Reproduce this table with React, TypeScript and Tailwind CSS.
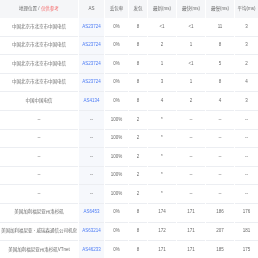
type Row = {
  loc: string
  as: string
  loss: string
  sent: string
  last: string
  best: string
  worst: string
  avg: string
}

const CN = '中国北京市北京市中国电信'

const ROWS: Row[] = [
  { loc: CN, as: 'AS23724', loss: '0%', sent: '8', last: '<1', best: '<1', worst: '11', avg: '3' },
  { loc: CN, as: 'AS23724', loss: '0%', sent: '8', last: '2', best: '1', worst: '8', avg: '3' },
  { loc: CN, as: 'AS23724', loss: '0%', sent: '8', last: '1', best: '<1', worst: '5', avg: '2' },
  { loc: CN, as: 'AS23724', loss: '0%', sent: '8', last: '3', best: '1', worst: '8', avg: '4' },
  { loc: '中国中国电信', as: 'AS4134', loss: '0%', sent: '8', last: '4', best: '2', worst: '4', avg: '3' },
  { loc: '--', as: '--', loss: '100%', sent: '2', last: '*', best: '--', worst: '--', avg: '--' },
  { loc: '--', as: '--', loss: '100%', sent: '2', last: '*', best: '--', worst: '--', avg: '--' },
  { loc: '--', as: '--', loss: '100%', sent: '2', last: '*', best: '--', worst: '--', avg: '--' },
  { loc: '--', as: '--', loss: '100%', sent: '2', last: '*', best: '--', worst: '--', avg: '--' },
  { loc: '--', as: '--', loss: '100%', sent: '2', last: '*', best: '--', worst: '--', avg: '--' },
  { loc: '美国加利福尼亚州洛杉矶', as: 'AS6453', loss: '0%', sent: '8', last: '174', best: '171', worst: '186', avg: '176' },
  { loc: '美国加利福尼亚 - 威瑞森通信公司机房', as: 'AS63214', loss: '0%', sent: '8', last: '172', best: '171', worst: '207', avg: '181' },
  { loc: '美国加利福尼亚州洛杉矶VTnet', as: 'AS46233', loss: '0%', sent: '8', last: '171', best: '171', worst: '185', avg: '175' },
]

const HEADS = ['AS', '丢包率', '发包', '最新(ms)', '最快(ms)', '最慢(ms)', '平均(ms)']

export default function App() {
  return (
    <div
      className="w-[258px] h-[258px] overflow-hidden bg-white text-[#6b6b6b] text-[4.5px] leading-none will-change-transform"
      style={{ fontFamily: '"Liberation Sans", "Noto Sans CJK SC", sans-serif' }}
    >
      <table className="w-[260px] table-fixed border-separate [border-spacing:1px_0] -mx-px">
        <colgroup>
          <col className="w-[78px]" />
          <col className="w-[25px]" />
          <col className="w-[23px]" />
          <col className="w-[18px]" />
          <col className="w-[28px]" />
          <col className="w-[28px]" />
          <col className="w-[28px]" />
          <col className="w-[23px]" />
        </colgroup>
        <thead>
          <tr className="h-[18px] bg-[#f5f6f8]">
            <th className="font-normal text-center">
              地理位置 / <span className="text-[#f56c6c]">仅供参考</span>
            </th>
            {HEADS.map((h) => (
              <th key={h} className="font-normal text-center whitespace-nowrap">
                {h}
              </th>
            ))}
          </tr>
        </thead>
        <tbody>
          {ROWS.map((r, i) => (
            <tr key={i} className="h-[18.6px]">
              <td className="text-center whitespace-nowrap border-b border-[#eceef2]">{r.loc}</td>
              <td
                className={`text-center bg-[#f6f8fc] border-b border-[#eceef2] ${r.as === '--' ? '' : 'text-[#4d7cf5]'}`}
              >
                {r.as}
              </td>
              <td className="text-center border-b border-[#eceef2]">{r.loss}</td>
              <td className="text-center border-b border-[#eceef2]">{r.sent}</td>
              <td className="text-center border-b border-[#eceef2]">{r.last}</td>
              <td className="text-center border-b border-[#eceef2]">{r.best}</td>
              <td className="text-center border-b border-[#eceef2]">{r.worst}</td>
              <td className="text-center border-b border-[#eceef2]">{r.avg}</td>
            </tr>
          ))}
        </tbody>
      </table>
    </div>
  )
}
